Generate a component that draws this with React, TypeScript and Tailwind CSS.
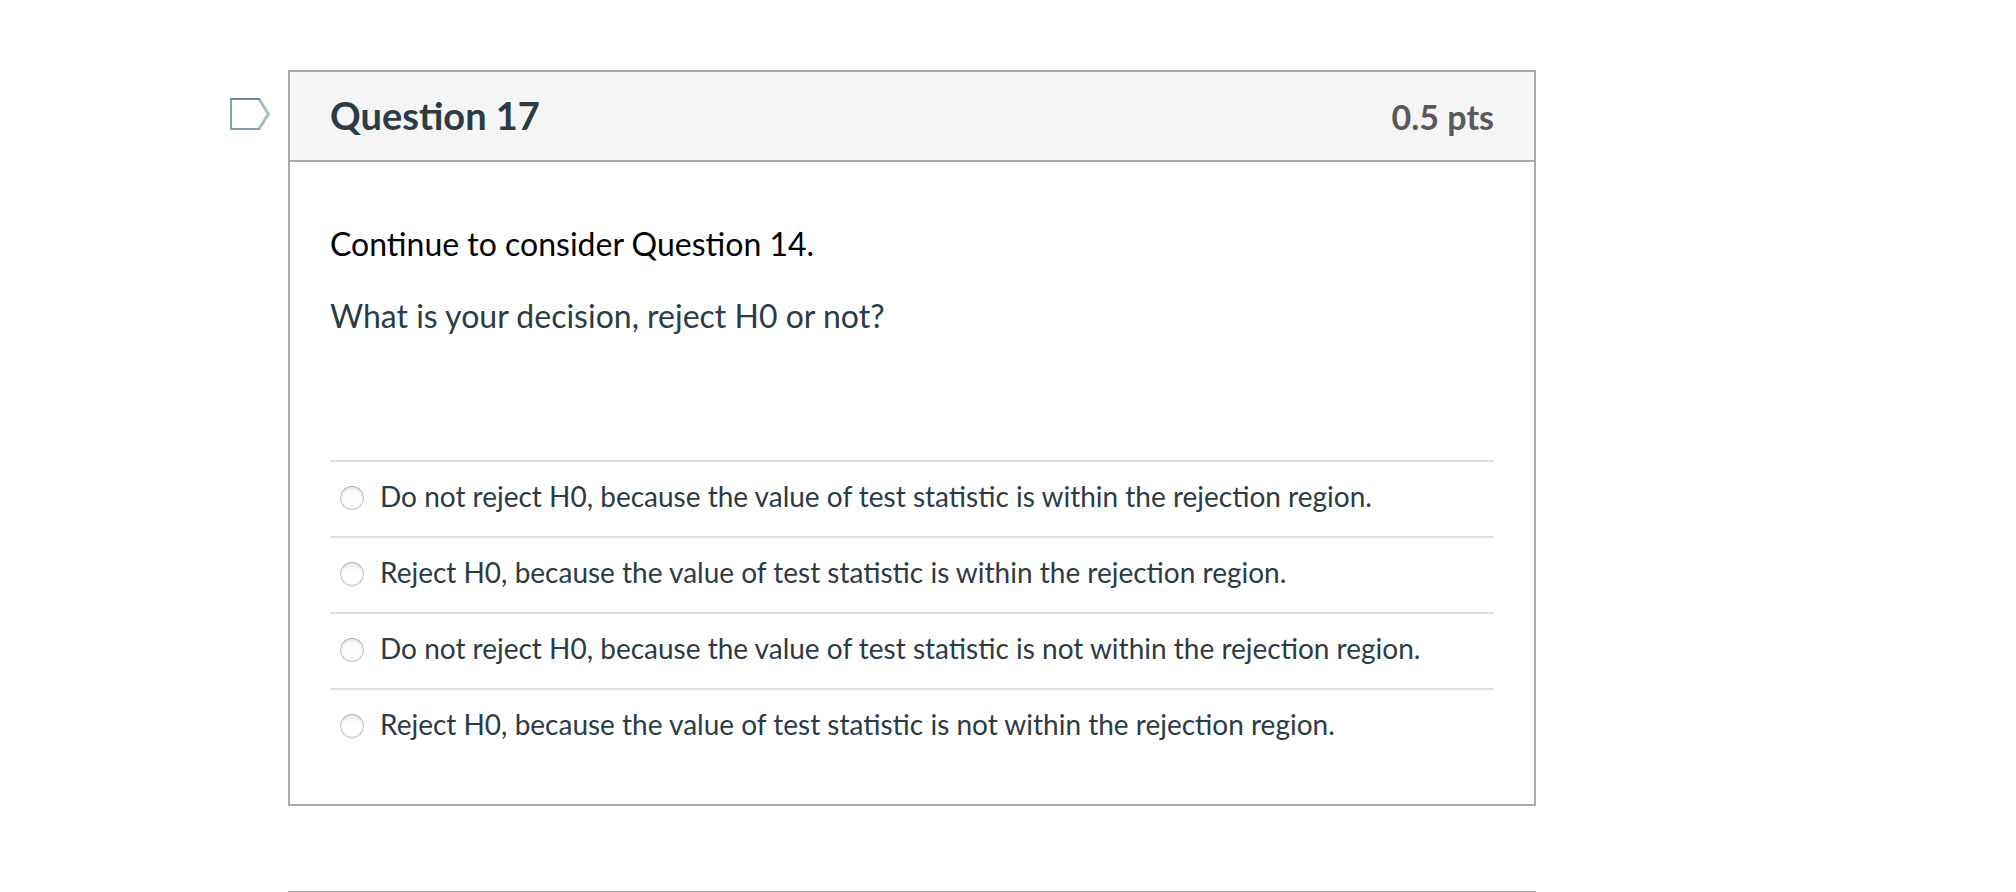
import { useState } from "react";

const answers = [
  "Do not reject H0, because the value of test statistic is within the rejection region.",
  "Reject H0, because the value of test statistic is within the rejection region.",
  "Do not reject H0, because the value of test statistic is not within the rejection region.",
  "Reject H0, because the value of test statistic is not within the rejection region.",
];

function FlagButton() {
  const [flagged, setFlagged] = useState(false);
  return (
    <button
      type="button"
      aria-label="Flag question"
      aria-pressed={flagged}
      onClick={() => setFlagged(!flagged)}
      className="mt-7 h-8 w-10 shrink-0 cursor-pointer"
    >
      <svg viewBox="0 0 40 32" className="block h-8 w-10" fill={flagged ? "#fc5e13" : "none"}>
        <path d="M29 31L38.4 16L29 1" stroke="#a6bac8" strokeWidth="3" />
        <path d="M30 31H1V1" stroke="#869fb3" strokeWidth="2" />
        <path d="M0 1H30" stroke="#6d8ba3" strokeWidth="2" />
      </svg>
    </button>
  );
}

export default function App() {
  const [selected, setSelected] = useState<number | null>(null);
  return (
    <main className="bg-white pt-[70px] pr-[480px] pl-[230px] font-['Lato',sans-serif] text-[#2d3b45]">
      <div className="flex items-start gap-[18px]">
        <FlagButton />
        <section className="min-w-0 flex-1 border-2 border-[#aaaaaa]">
          <header className="flex items-baseline justify-between border-b-2 border-[#aaaaaa] bg-[#f5f5f5] px-10 py-[19px]">
            <h2 className="text-[38px] leading-12 font-bold">Question 17</h2>
            <span className="text-[34px] leading-12 font-bold text-[#595959]">0.5 pts</span>
          </header>
          <div className="px-10 pt-[58px] pb-10">
            <div className="flex flex-col gap-6 text-[32px] leading-12">
              <p className="text-black">Continue to consider Question 14.</p>
              <p>What is your decision, reject H0 or not?</p>
            </div>
            <fieldset aria-label="Answers" className="mt-30">
              {answers.map((answer, index) => (
                <label
                  key={answer}
                  className="flex cursor-pointer items-start gap-4 border-t-2 border-[#dddddd] px-2.5 pt-3.5 pb-5 text-[28px] leading-10"
                >
                  <input
                    type="radio"
                    name="answer"
                    checked={selected === index}
                    onChange={() => setSelected(index)}
                    className="mt-2.5 size-6 shrink-0 cursor-pointer appearance-none rounded-full border border-[#c0c0c0] border-t-[#a8a8a8] bg-linear-to-b from-[#f5f5f5] to-white to-50% shadow-[inset_0_1px_3px_#dddddd] checked:bg-[#2d3b45]"
                  />
                  <span>{answer}</span>
                </label>
              ))}
            </fieldset>
          </div>
        </section>
      </div>
      <div className="mt-[85px] ml-[58px] border-t border-[#aaaaaa]" />
    </main>
  );
}
